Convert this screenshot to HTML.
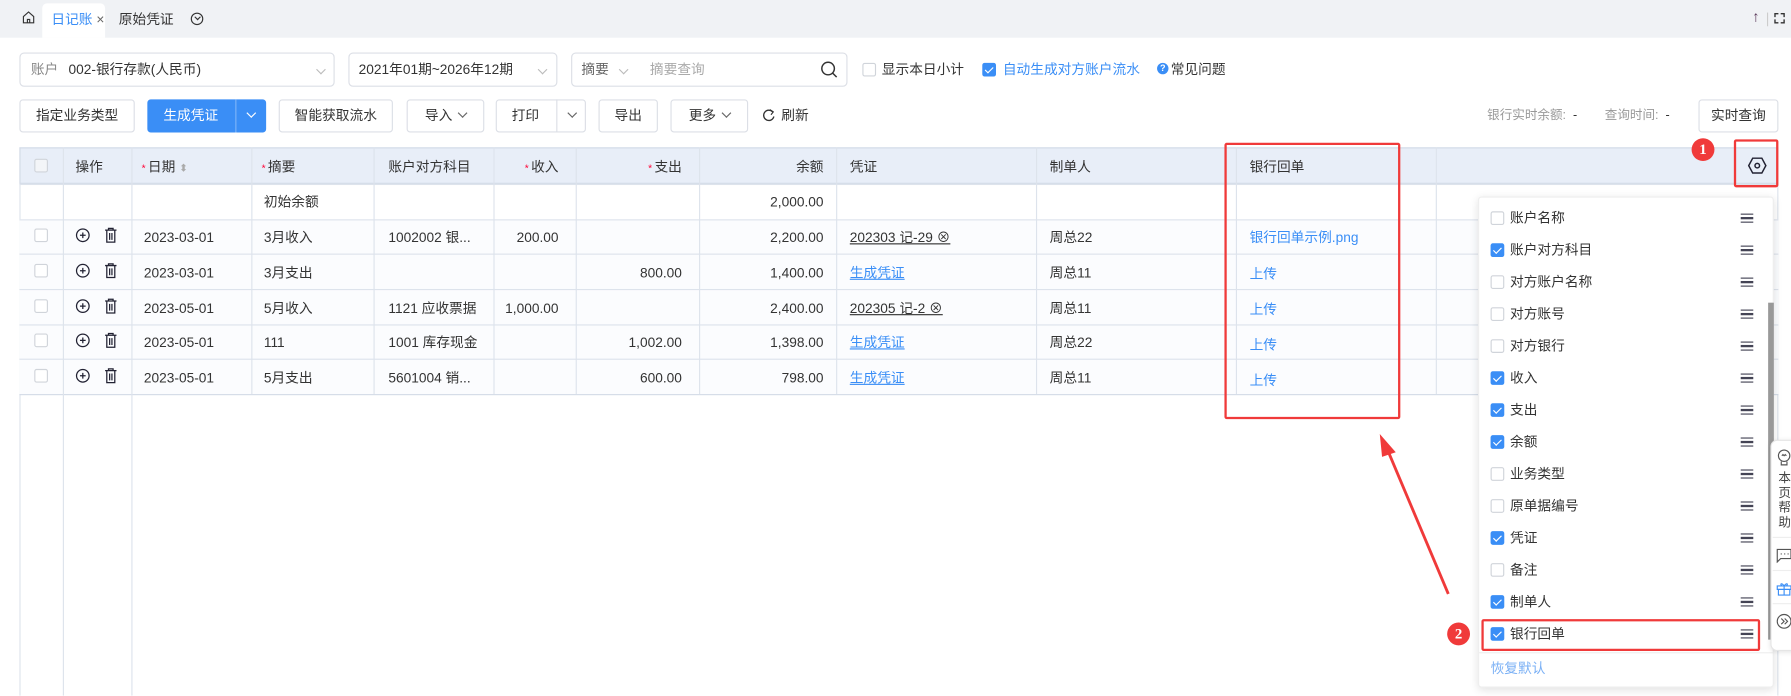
<!DOCTYPE html>
<html><head><meta charset="utf-8">
<style>
*{box-sizing:border-box;margin:0;padding:0}
html,body{width:1791px;height:696px;overflow:hidden;background:#fff}
#w{position:absolute;left:0;top:0;width:1568px;height:609px;transform:scale(1.1422);transform-origin:0 0;font-family:"Liberation Sans","Noto Sans CJK SC",sans-serif;font-size:12px;color:#333}
.a{position:absolute}
.tb{left:0;top:0;width:1568px;height:33px;background:#f0f2f5}
.box{position:absolute;border:1px solid #dcdfe6;border-radius:4px;background:#fff}
.btn{position:absolute;border:1px solid #dcdfe6;border-radius:3px;background:#fff;height:29px;top:87px;line-height:27px;text-align:center;font-size:12px;color:#333}
.chev{display:inline-block;width:6px;height:6px;border-right:1px solid #666;border-bottom:1px solid #666;transform:rotate(45deg);margin:0 0 3px 6px}
.cb{position:absolute;width:12px;height:12px;border:1px solid #d0d4da;border-radius:2px;background:#fff}
.cbon{background:#3a8ef6;border-color:#3a8ef6}
.cbon:after{content:"";position:absolute;left:3px;top:1px;width:3px;height:6px;border-right:1.3px solid #fff;border-bottom:1.3px solid #fff;transform:rotate(45deg)}
.vl{position:absolute;width:1px;background:#dde3ec}
.hl{position:absolute;height:1px;background:#dde3ec;left:17px;width:1540px}
.t{position:absolute;white-space:nowrap;font-size:12px;line-height:14px}
.r{text-align:right}
.star{color:#f03;font-size:9px;margin-right:2px}
.lk{color:#3a8ef6;text-decoration:underline}
.blue{color:#3a8ef6}
.menu{position:absolute;left:1524px;width:11px;height:8px;border-top:1.3px solid #445;border-bottom:1.3px solid #445}
.menu:after{content:"";position:absolute;left:0;top:2.3px;width:11px;height:1.3px;background:#445}
.badge{position:absolute;width:20px;height:20px;border-radius:50%;background:#f03a3a;color:#fff;font-family:"Liberation Serif",serif;font-weight:bold;font-size:13px;line-height:20px;text-align:center}
.red{position:absolute;border:2.5px solid #f03a3a;border-radius:2px}
.ops{position:absolute;left:66px}
</style></head><body><div id="w">
<div class="a tb"></div>
<div class="a" style="left:37px;top:3px;width:55px;height:30px;background:#fff;border-radius:4px 4px 0 0"></div>
<svg class="a" style="left:19px;top:9px" width="12" height="12" viewBox="0 0 12 12"><path d="M1.5 5.5L6 1.5 10.5 5.5V11H1.5Z M5 11V8H7V11" fill="none" stroke="#333" stroke-width="1"/></svg>
<div class="t blue" style="left:45px;top:10px">日记账 <span style="color:#666">×</span></div>
<div class="t" style="left:104px;top:10px">原始凭证</div>
<div class="a" style="left:167px;top:11px;width:11px;height:11px;border:1px solid #333;border-radius:50%"></div>
<div class="a" style="left:170.5px;top:13px;width:4px;height:4px;border-right:1px solid #333;border-bottom:1px solid #333;transform:rotate(45deg)"></div>
<div class="t" style="left:1534px;top:8px;font-size:13px;color:#535">↑</div>
<div class="a" style="left:1547px;top:11px;width:1px;height:12px;background:#ccc"></div>
<svg class="a" style="left:1553px;top:11px" width="10" height="10"><path d="M1 4V1H4M6 1H9V4M9 6V9H6M4 9H1V6" fill="none" stroke="#333" stroke-width="1.2"/></svg>

<div class="box" style="left:17px;top:46px;width:276px;height:30px"></div>
<div class="t" style="left:27px;top:54px;color:#888">账户</div>
<div class="t" style="left:60px;top:54px">002-银行存款(人民币)</div>
<div class="a" style="left:272px;top:56px"><span class="chev" style="border-color:#bbb"></span></div>
<div class="box" style="left:305px;top:46px;width:183px;height:30px"></div>
<div class="t" style="left:314px;top:54px">2021年01期~2026年12期</div>
<div class="a" style="left:466px;top:56px"><span class="chev" style="border-color:#bbb"></span></div>
<div class="box" style="left:500px;top:46px;width:242px;height:30px"></div>
<div class="t" style="left:509px;top:54px;color:#666">摘要</div>
<div class="a" style="left:537px;top:56px"><span class="chev" style="border-color:#bbb"></span></div>
<div class="t" style="left:569px;top:54px;color:#aaa">摘要查询</div>
<svg class="a" style="left:718px;top:53px" width="16" height="16"><circle cx="7" cy="7" r="5.5" fill="none" stroke="#333" stroke-width="1.3"/><path d="M11 11L14.5 14.5" stroke="#333" stroke-width="1.3"/></svg>
<div class="cb" style="left:755px;top:55px"></div>
<div class="t" style="left:772px;top:54px">显示本日小计</div>
<div class="cb cbon" style="left:860px;top:55px"></div>
<div class="t blue" style="left:878px;top:54px">自动生成对方账户流水</div>
<div class="a" style="left:1013px;top:55px;width:10px;height:10px;border-radius:50%;background:#3a8ef6;color:#fff;font-size:8px;line-height:10px;text-align:center;font-weight:bold">?</div>
<div class="t" style="left:1025px;top:54px">常见问题</div>

<div class="btn" style="left:17px;width:101px">指定业务类型</div>
<div class="btn" style="left:129px;width:104px;background:#3a8ef6;border-color:#3a8ef6;color:#fff;text-align:left;padding-left:13px">生成凭证</div>
<div class="a" style="left:206px;top:87px;width:1px;height:29px;background:#7db4f8"></div>
<div class="a" style="left:211px;top:94px"><span class="chev" style="border-color:#fff"></span></div>
<div class="btn" style="left:244px;width:100px">智能获取流水</div>
<div class="btn" style="left:356px;width:68px">导入<span class="chev"></span></div>
<div class="btn" style="left:434px;width:79px;text-align:left;padding-left:13px">打印</div>
<div class="a" style="left:487px;top:87px;width:1px;height:29px;background:#dcdfe6"></div>
<div class="a" style="left:492px;top:94px"><span class="chev"></span></div>
<div class="btn" style="left:524px;width:52px">导出</div>
<div class="btn" style="left:587px;width:68px">更多<span class="chev"></span></div>
<svg class="a" style="left:667px;top:95px" width="12" height="12"><path d="M9.5 3A4.5 4.5 0 1 0 10.5 7" fill="none" stroke="#333" stroke-width="1.2"/><path d="M7 1L10 3 8 5.5" fill="none" stroke="#333" stroke-width="1"/></svg>
<div class="t" style="left:684px;top:94px">刷新</div>
<div class="t" style="left:1302px;top:94px;font-size:11px;color:#999">银行实时余额: <span style="color:#333">&nbsp;-</span></div>
<div class="t" style="left:1405px;top:94px;font-size:11px;color:#999">查询时间: <span style="color:#333">&nbsp;-</span></div>
<div class="btn" style="left:1487px;width:70px">实时查询</div>

<!-- table -->
<div class="a" style="left:17px;top:129px;width:1540px;height:480px;border:1px solid #dde3ec;border-bottom:none"></div>
<div class="a" style="left:17px;top:129px;width:1540px;height:32px;background:#e8eef8;border:1px solid #d3dbe7"></div>
<div class="a" style="left:17px;top:192px;width:1540px;height:153px;background:#fbfcfe"></div>
<div class="hl" style="top:161px"></div><div class="hl" style="top:192px"></div><div class="hl" style="top:222px"></div><div class="hl" style="top:253px"></div><div class="hl" style="top:284px"></div><div class="hl" style="top:314px"></div><div class="hl" style="top:345px;background:#d3dbe7"></div>
<div class="vl" style="left:55px;top:129px;height:480px"></div>
<div class="vl" style="left:115px;top:129px;height:480px"></div>
<div class="vl" style="left:220px;top:129px;height:216px"></div>
<div class="vl" style="left:327px;top:129px;height:216px"></div>
<div class="vl" style="left:432px;top:129px;height:216px"></div>
<div class="vl" style="left:504px;top:129px;height:216px"></div>
<div class="vl" style="left:612px;top:129px;height:216px"></div>
<div class="vl" style="left:732px;top:129px;height:216px"></div>
<div class="vl" style="left:907px;top:129px;height:216px"></div>
<div class="vl" style="left:1082px;top:129px;height:216px"></div>
<div class="vl" style="left:1257px;top:129px;height:216px"></div>
<div class="vl" style="left:1519px;top:129px;height:32px"></div>

<div class="cb" style="left:30px;top:139px;background:#f3f5f8"></div>
<div class="t" style="left:66px;top:139px">操作</div>
<div class="t" style="left:124px;top:139px"><span class="star">*</span>日期 <span style="color:#aaa;font-size:9px">⬍</span></div>
<div class="t" style="left:229px;top:139px"><span class="star">*</span>摘要</div>
<div class="t" style="left:340px;top:139px">账户对方科目</div>
<div class="t r" style="left:432px;width:57px;top:139px"><span class="star">*</span>收入</div>
<div class="t r" style="left:504px;width:93px;top:139px"><span class="star">*</span>支出</div>
<div class="t r" style="left:612px;width:109px;top:139px">余额</div>
<div class="t" style="left:744px;top:139px">凭证</div>
<div class="t" style="left:919px;top:139px">制单人</div>
<div class="t" style="left:1094px;top:139px">银行回单</div>
<svg class="a" style="left:1530px;top:137px" width="17" height="16"><path d="M4.5 1.5H12.5L16 8 12.5 14.5H4.5L1 8Z" fill="none" stroke="#223" stroke-width="1.3"/><circle cx="8.5" cy="8" r="2" fill="none" stroke="#223" stroke-width="1.3"/></svg>

<div class="t" style="left:231px;top:170px">初始余额</div>
<div class="t r" style="left:612px;width:109px;top:170px">2,000.00</div>

<div class="cb" style="left:30px;top:200px"></div><div class="cb" style="left:30px;top:231px"></div><div class="cb" style="left:30px;top:262px"></div><div class="cb" style="left:30px;top:292px"></div><div class="cb" style="left:30px;top:323px"></div>
<svg class="ops" style="top:199px" width="40" height="14"><circle cx="6.5" cy="7" r="5.5" fill="none" stroke="#223" stroke-width="1.1"/><path d="M6.5 4.5V9.5M4 7H9" stroke="#223" stroke-width="1.1"/><path d="M26 2.5H36M29 2.5V1H33V2.5M27.5 2.5V13H34.5V2.5M30 5V11M32 5V11" fill="none" stroke="#223" stroke-width="1.1"/></svg>
<svg class="ops" style="top:230px" width="40" height="14"><circle cx="6.5" cy="7" r="5.5" fill="none" stroke="#223" stroke-width="1.1"/><path d="M6.5 4.5V9.5M4 7H9" stroke="#223" stroke-width="1.1"/><path d="M26 2.5H36M29 2.5V1H33V2.5M27.5 2.5V13H34.5V2.5M30 5V11M32 5V11" fill="none" stroke="#223" stroke-width="1.1"/></svg>
<svg class="ops" style="top:261px" width="40" height="14"><circle cx="6.5" cy="7" r="5.5" fill="none" stroke="#223" stroke-width="1.1"/><path d="M6.5 4.5V9.5M4 7H9" stroke="#223" stroke-width="1.1"/><path d="M26 2.5H36M29 2.5V1H33V2.5M27.5 2.5V13H34.5V2.5M30 5V11M32 5V11" fill="none" stroke="#223" stroke-width="1.1"/></svg>
<svg class="ops" style="top:291px" width="40" height="14"><circle cx="6.5" cy="7" r="5.5" fill="none" stroke="#223" stroke-width="1.1"/><path d="M6.5 4.5V9.5M4 7H9" stroke="#223" stroke-width="1.1"/><path d="M26 2.5H36M29 2.5V1H33V2.5M27.5 2.5V13H34.5V2.5M30 5V11M32 5V11" fill="none" stroke="#223" stroke-width="1.1"/></svg>
<svg class="ops" style="top:322px" width="40" height="14"><circle cx="6.5" cy="7" r="5.5" fill="none" stroke="#223" stroke-width="1.1"/><path d="M6.5 4.5V9.5M4 7H9" stroke="#223" stroke-width="1.1"/><path d="M26 2.5H36M29 2.5V1H33V2.5M27.5 2.5V13H34.5V2.5M30 5V11M32 5V11" fill="none" stroke="#223" stroke-width="1.1"/></svg>

<div class="t" style="left:126px;top:201px">2023-03-01</div><div class="t" style="left:231px;top:201px">3月收入</div><div class="t" style="left:340px;top:201px">1002002 银...</div><div class="t r" style="left:432px;width:57px;top:201px">200.00</div><div class="t r" style="left:612px;width:109px;top:201px">2,200.00</div><div class="t" style="left:744px;top:201px;text-decoration:underline">202303 记-29 ⊗</div><div class="t" style="left:919px;top:201px">周总22</div><div class="t blue" style="left:1094px;top:201px">银行回单示例.png</div>
<div class="t" style="left:126px;top:232px">2023-03-01</div><div class="t" style="left:231px;top:232px">3月支出</div><div class="t r" style="left:504px;width:93px;top:232px">800.00</div><div class="t r" style="left:612px;width:109px;top:232px">1,400.00</div><div class="t lk" style="left:744px;top:232px">生成凭证</div><div class="t" style="left:919px;top:232px">周总11</div><div class="t blue" style="left:1094px;top:233px">上传</div>
<div class="t" style="left:126px;top:263px">2023-05-01</div><div class="t" style="left:231px;top:263px">5月收入</div><div class="t" style="left:340px;top:263px">1121 应收票据</div><div class="t r" style="left:432px;width:57px;top:263px">1,000.00</div><div class="t r" style="left:612px;width:109px;top:263px">2,400.00</div><div class="t" style="left:744px;top:263px;text-decoration:underline">202305 记-2 ⊗</div><div class="t" style="left:919px;top:263px">周总11</div><div class="t blue" style="left:1094px;top:264px">上传</div>
<div class="t" style="left:126px;top:293px">2023-05-01</div><div class="t" style="left:231px;top:293px">111</div><div class="t" style="left:340px;top:293px">1001 库存现金</div><div class="t r" style="left:504px;width:93px;top:293px">1,002.00</div><div class="t r" style="left:612px;width:109px;top:293px">1,398.00</div><div class="t lk" style="left:744px;top:293px">生成凭证</div><div class="t" style="left:919px;top:293px">周总22</div><div class="t blue" style="left:1094px;top:295px">上传</div>
<div class="t" style="left:126px;top:324px">2023-05-01</div><div class="t" style="left:231px;top:324px">5月支出</div><div class="t" style="left:340px;top:324px">5601004 销...</div><div class="t r" style="left:504px;width:93px;top:324px">600.00</div><div class="t r" style="left:612px;width:109px;top:324px">798.00</div><div class="t lk" style="left:744px;top:324px">生成凭证</div><div class="t" style="left:919px;top:324px">周总11</div><div class="t blue" style="left:1094px;top:326px">上传</div>

<!-- annotations -->
<div class="red" style="left:1072px;top:125px;width:154px;height:242px"></div>
<svg class="a" style="left:1200px;top:378px" width="80" height="150"><path d="M68 142L14 14" stroke="#f03a3a" stroke-width="2.5"/><path d="M8 2L22 18 10 22Z" fill="#f03a3a"/></svg>
<div class="badge" style="left:1481px;top:121px">1</div>
<div class="red" style="left:1518px;top:122px;width:39px;height:42px"></div>

<!-- dropdown -->
<div class="a" style="left:1294px;top:172px;width:259px;height:430px;background:#fff;border:1px solid #eee;border-radius:3px;box-shadow:0 2px 8px rgba(0,0,0,.12)"></div>
<div class="a" style="left:1548px;top:265px;width:5px;height:295px;background:#999"></div>
<div class="cb" style="left:1305px;top:185px"></div><div class="t" style="left:1322px;top:184px">账户名称</div><div class="menu" style="top:187px"></div>
<div class="cb cbon" style="left:1305px;top:213px"></div><div class="t" style="left:1322px;top:212px">账户对方科目</div><div class="menu" style="top:215px"></div>
<div class="cb" style="left:1305px;top:241px"></div><div class="t" style="left:1322px;top:240px">对方账户名称</div><div class="menu" style="top:243px"></div>
<div class="cb" style="left:1305px;top:269px"></div><div class="t" style="left:1322px;top:268px">对方账号</div><div class="menu" style="top:271px"></div>
<div class="cb" style="left:1305px;top:297px"></div><div class="t" style="left:1322px;top:296px">对方银行</div><div class="menu" style="top:299px"></div>
<div class="cb cbon" style="left:1305px;top:325px"></div><div class="t" style="left:1322px;top:324px">收入</div><div class="menu" style="top:327px"></div>
<div class="cb cbon" style="left:1305px;top:353px"></div><div class="t" style="left:1322px;top:352px">支出</div><div class="menu" style="top:355px"></div>
<div class="cb cbon" style="left:1305px;top:381px"></div><div class="t" style="left:1322px;top:380px">余额</div><div class="menu" style="top:383px"></div>
<div class="cb" style="left:1305px;top:409px"></div><div class="t" style="left:1322px;top:408px">业务类型</div><div class="menu" style="top:411px"></div>
<div class="cb" style="left:1305px;top:437px"></div><div class="t" style="left:1322px;top:436px">原单据编号</div><div class="menu" style="top:439px"></div>
<div class="cb cbon" style="left:1305px;top:465px"></div><div class="t" style="left:1322px;top:464px">凭证</div><div class="menu" style="top:467px"></div>
<div class="cb" style="left:1305px;top:493px"></div><div class="t" style="left:1322px;top:492px">备注</div><div class="menu" style="top:495px"></div>
<div class="cb cbon" style="left:1305px;top:521px"></div><div class="t" style="left:1322px;top:520px">制单人</div><div class="menu" style="top:523px"></div>
<div class="cb cbon" style="left:1305px;top:549px"></div><div class="t" style="left:1322px;top:548px">银行回单</div><div class="menu" style="top:551px"></div>
<div class="a" style="left:1294px;top:571px;width:259px;height:1px;background:#eee"></div>
<div class="t" style="left:1305px;top:578px;color:#7ab0f5">恢复默认</div>
<div class="red" style="left:1297px;top:542px;width:244px;height:28px"></div>
<div class="badge" style="left:1267px;top:545px">2</div>

<!-- side help -->
<div class="a" style="left:1550px;top:385px;width:22px;height:185px;background:#fff;border:1px solid #e5e5e5;border-radius:6px 0 0 6px;box-shadow:0 1px 4px rgba(0,0,0,.1)"></div>
<svg class="a" style="left:1555px;top:393px" width="14" height="16"><circle cx="7" cy="6" r="5" fill="none" stroke="#555" stroke-width="1"/><path d="M4.5 11V14H9.5V11M5 6L6 5 7 6 8 5 9 6" fill="none" stroke="#555" stroke-width="1"/></svg>
<div class="t" style="left:1557px;top:413px;font-size:11px;line-height:13px;width:11px;white-space:normal;color:#444">本页帮助</div>
<div class="a" style="left:1552px;top:470px;width:20px;height:1px;background:#eee"></div>
<svg class="a" style="left:1555px;top:480px" width="14" height="13"><path d="M1 1H13V9H4L1 12Z" fill="none" stroke="#555" stroke-width="1"/><path d="M4 5H5M7 5H8M10 5H11" stroke="#555" stroke-width="1"/></svg>
<div class="a" style="left:1552px;top:499px;width:20px;height:1px;background:#eee"></div>
<svg class="a" style="left:1555px;top:509px" width="14" height="13"><path d="M1 4H13V7H1ZM2 7V12H12V7M7 4V12M7 4C5 1 3 2 5 4M7 4C9 1 11 2 9 4" fill="none" stroke="#3a8ef6" stroke-width="1"/></svg>
<div class="a" style="left:1552px;top:528px;width:20px;height:1px;background:#eee"></div>
<svg class="a" style="left:1555px;top:537px" width="14" height="14"><circle cx="7" cy="7" r="6" fill="none" stroke="#555" stroke-width="1"/><path d="M4.5 4.5L7 7 4.5 9.5M7.5 4.5L10 7 7.5 9.5" fill="none" stroke="#555" stroke-width="1"/></svg>
</div></body></html>
